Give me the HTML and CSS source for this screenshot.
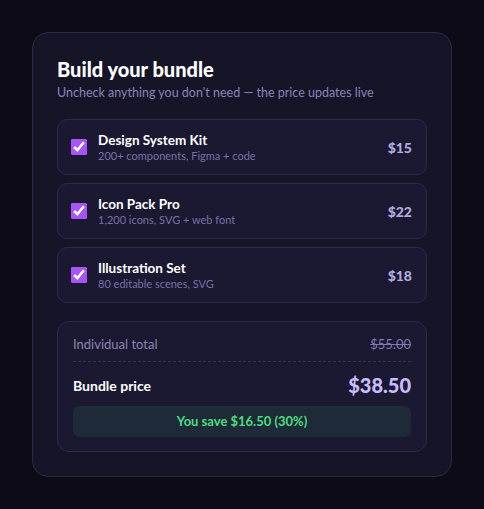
FILE: index.html
```html
<!DOCTYPE html>
<html lang="en">
<head>
    <meta charset="UTF-8">
    <meta name="viewport" content="width=device-width, initial-scale=1.0">
    <title>Build your bundle</title>
    <link rel="stylesheet" href="styles.css">
</head>
<body>
    <div class="card">
        <h1>Build your bundle</h1>
        <p class="lead">Uncheck anything you don't need — the price updates live</p>
        <div class="items">
            <label class="item">
                <input type="checkbox" checked>
                <div class="info">
                    <div class="name">Design System Kit</div>
                    <div class="desc">200+ components, Figma + code</div>
                </div>
                <span class="price">$15</span>
            </label>
            <label class="item">
                <input type="checkbox" checked>
                <div class="info">
                    <div class="name">Icon Pack Pro</div>
                    <div class="desc">1,200 icons, SVG + web font</div>
                </div>
                <span class="price">$22</span>
            </label>
            <label class="item">
                <input type="checkbox" checked>
                <div class="info">
                    <div class="name">Illustration Set</div>
                    <div class="desc">80 editable scenes, SVG</div>
                </div>
                <span class="price">$18</span>
            </label>
        </div>
        <div class="summary">
            <div class="row total">
                <span>Individual total</span>
                <s>$55.00</s>
            </div>
            <div class="row bundle">
                <span>Bundle price</span>
                <span class="big">$38.50</span>
            </div>
            <div class="save">You save $16.50 (30%)</div>
        </div>
    </div>
</body>
</html>
```

FILE: styles.css
```css
body {
    background-color: #0c0b16;
    font-family: Lato, "Noto Sans", sans-serif;
    margin: 0;
    padding: 32px;
}
.card {
    width: 370px;
    background-color: #161427;
    border: 1px solid #2b2848;
    border-radius: 16px;
    padding: 24px;
}
h1 {
    margin: 0;
    font-size: 20px;
    font-weight: 900;
    color: #ffffff;
    line-height: 24px;
}
.lead {
    margin: 3px 0 17px;
    font-size: 12.5px;
    color: #8884b8;
    line-height: 18px;
}
.items {
    display: flex;
    flex-direction: column;
    gap: 8px;
}
.item {
    display: flex;
    align-items: center;
    height: 54px;
    padding: 0 14px 0 13px;
    background-color: #1b1932;
    border: 1px solid #2c2950;
    border-radius: 10px;
    cursor: pointer;
}
.item input {
    accent-color: #a855f7;
    width: 16px;
    height: 16px;
    margin: 0 11px 0 0;
}
.info {
    flex: 1;
}
.name {
    font-size: 13.5px;
    font-weight: 700;
    color: #ffffff;
    line-height: 17px;
}
.desc {
    font-size: 11px;
    color: #7672a6;
    line-height: 14px;
}
.price {
    font-size: 14px;
    font-weight: 900;
    color: #b1acdf;
}
.summary {
    margin-top: 18px;
    background-color: #1b1932;
    border: 1px solid #2c2950;
    border-radius: 12px;
    padding: 14px 15px 14px;
}
.row {
    display: flex;
    justify-content: space-between;
    align-items: center;
}
.total {
    font-size: 13px;
    line-height: 17px;
    color: #8a86ad;
    padding-bottom: 8px;
    border-bottom: 1px dashed #34305a;
}
.total s {
    color: #7f7aa8;
}
.bundle {
    padding: 12px 0 9px;
    font-size: 14px;
    font-weight: 700;
    color: #ffffff;
    line-height: 23px;
}
.big {
    font-size: 20px;
    font-weight: 900;
    color: #c9bcfb;
}
.save {
    background-color: #1f2a38;
    border-radius: 7px;
    padding: 7px 0;
    text-align: center;
    font-size: 13px;
    font-weight: 700;
    color: #4ade80;
    line-height: 17px;
}
```
